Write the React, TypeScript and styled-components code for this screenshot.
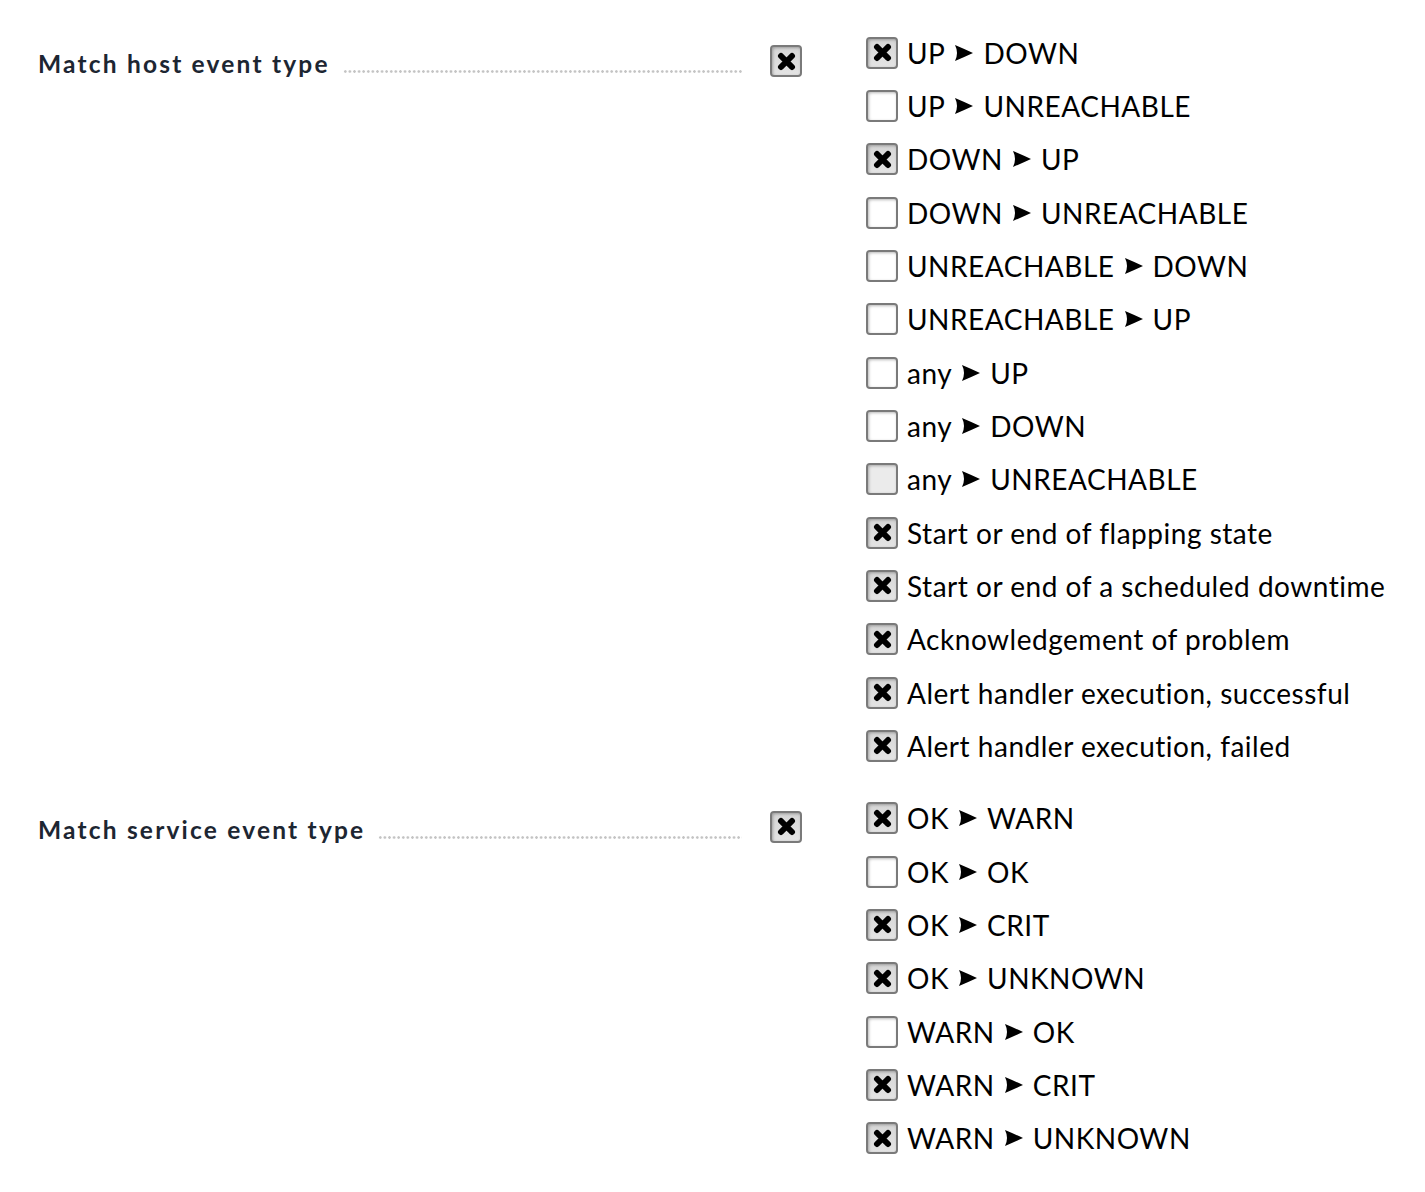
import React from "react";
import styled, { createGlobalStyle } from "styled-components";

const Global = createGlobalStyle`
  html, body { margin: 0; padding: 0; background: #fff; }
  body { font-family: Lato, "Open Sans", sans-serif; }
`;

const Page = styled.div`
  display: flex;
  flex-direction: column;
  gap: 19px;
  padding: 26px 0 0 38px;
`;

const Section = styled.div`
  display: grid;
  grid-template-columns: 704px 124px 1fr;
  align-items: start;
`;

const LabelCell = styled.div`
  display: flex;
  align-items: baseline;
  gap: 13px;
  padding-top: 23px;
`;

const LabelText = styled.span`
  font-size: 24.5px;
  font-weight: 700;
  letter-spacing: 2.2px;
  color: #1d2632;
  white-space: nowrap;
`;

const Dots = styled.span`
  flex: 1;
  height: 3px;
  background-image: radial-gradient(circle, #c4c4c4 1.1px, transparent 1.5px);
  background-size: 4.6px 3px;
  background-repeat: repeat-x;
`;

const ToggleCell = styled.div`
  padding: 19px 0 0 28px;
`;

const Box = styled.span<{ $checked: boolean; $muted?: boolean }>`
  box-sizing: border-box;
  width: 32px;
  height: 32px;
  flex: none;
  display: inline-flex;
  align-items: center;
  justify-content: center;
  border: 2px solid #7a7a7a;
  border-radius: 4px;
  background: ${(p) =>
    p.$checked
      ? "linear-gradient(#d6d6d6, #e4e4e4)"
      : p.$muted
      ? "#ebebeb"
      : "#ffffff"};
  box-shadow: inset 1px 1px 3px rgba(0, 0, 0, 0.28);
`;

const Options = styled.div`
  display: flex;
  flex-direction: column;
`;

const Option = styled.label`
  display: flex;
  align-items: center;
  gap: 9px;
  height: 53.33px;
  font-size: 28px;
  color: #000;
  letter-spacing: 0.52px;
  white-space: nowrap;
`;

const Caption = styled.span`
  display: inline-flex;
  align-items: center;
`;

const ArrowIcon = styled.svg`
  margin: 0 10px;
  flex: none;
`;

const Arrow = () => (
  <ArrowIcon width="18" height="16" viewBox="0 0 18 16">
    <path d="M0 0 Q9 3.8 18 8 Q9 12.2 0 16 Q4 8 0 0 Z" fill="#000" />
  </ArrowIcon>
);

const Cross = () => (
  <svg width="19" height="19" viewBox="0 0 19 19">
    <path
      d="M4 4 L15 15 M15 4 L4 15"
      stroke="#000"
      strokeWidth="6"
      strokeLinecap="round"
    />
  </svg>
);

const Check: React.FC<{ checked: boolean; muted?: boolean }> = ({
  checked,
  muted,
}) => (
  <Box $checked={checked} $muted={muted}>
    {checked && <Cross />}
  </Box>
);

type Item = { from?: string; to?: string; text?: string; on: boolean; muted?: boolean };

const host: Item[] = [
  { from: "UP", to: "DOWN", on: true },
  { from: "UP", to: "UNREACHABLE", on: false },
  { from: "DOWN", to: "UP", on: true },
  { from: "DOWN", to: "UNREACHABLE", on: false },
  { from: "UNREACHABLE", to: "DOWN", on: false },
  { from: "UNREACHABLE", to: "UP", on: false },
  { from: "any", to: "UP", on: false },
  { from: "any", to: "DOWN", on: false },
  { from: "any", to: "UNREACHABLE", on: false, muted: true },
  { text: "Start or end of flapping state", on: true },
  { text: "Start or end of a scheduled downtime", on: true },
  { text: "Acknowledgement of problem", on: true },
  { text: "Alert handler execution, successful", on: true },
  { text: "Alert handler execution, failed", on: true },
];

const service: Item[] = [
  { from: "OK", to: "WARN", on: true },
  { from: "OK", to: "OK", on: false },
  { from: "OK", to: "CRIT", on: true },
  { from: "OK", to: "UNKNOWN", on: true },
  { from: "WARN", to: "OK", on: false },
  { from: "WARN", to: "CRIT", on: true },
  { from: "WARN", to: "UNKNOWN", on: true },
];

const Block: React.FC<{ label: string; items: Item[] }> = ({ label, items }) => (
  <Section>
    <LabelCell>
      <LabelText>{label}</LabelText>
      <Dots />
    </LabelCell>
    <ToggleCell>
      <Check checked />
    </ToggleCell>
    <Options>
      {items.map((it, i) => (
        <Option key={i}>
          <Check checked={it.on} muted={it.muted} />
          {it.text ? (
            <Caption>{it.text}</Caption>
          ) : (
            <Caption>
              {it.from}
              <Arrow />
              {it.to}
            </Caption>
          )}
        </Option>
      ))}
    </Options>
  </Section>
);

export default function App() {
  return (
    <>
      <Global />
      <Page>
        <Block label="Match host event type" items={host} />
        <Block label="Match service event type" items={service} />
      </Page>
    </>
  );
}
